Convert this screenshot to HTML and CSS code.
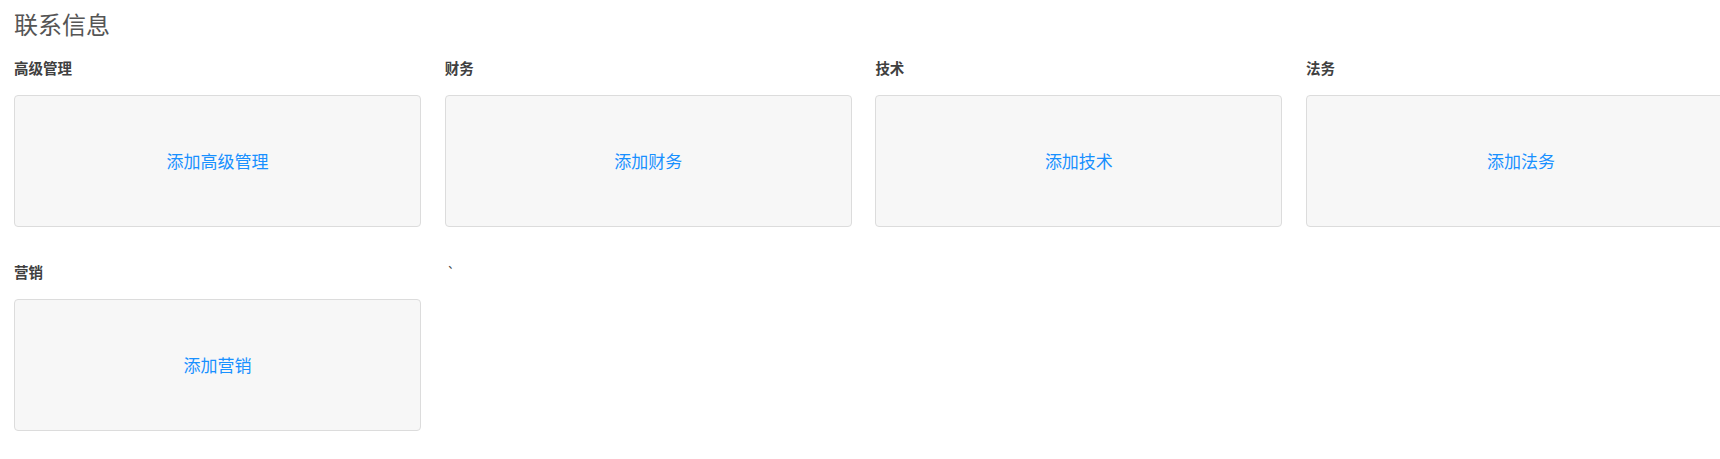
FILE: index.html
```html
<!DOCTYPE html>
<html lang="zh-CN">
<head>
<meta charset="utf-8">
<title>联系信息</title>
<link rel="stylesheet" href="styles.css">
</head>
<body>
<div class="page">
  <h1 class="title">联系信息</h1>
  <div class="grid">
    <section class="group">
      <div class="label">高级管理</div>
      <div class="card"><a class="add">添加高级管理</a></div>
    </section>
    <section class="group">
      <div class="label">财务</div>
      <div class="card"><a class="add">添加财务</a></div>
    </section>
    <section class="group">
      <div class="label">技术</div>
      <div class="card"><a class="add">添加技术</a></div>
    </section>
    <section class="group">
      <div class="label">法务</div>
      <div class="card"><a class="add">添加法务</a></div>
    </section>
    <section class="group">
      <div class="label">营销</div>
      <div class="card"><a class="add">添加营销</a></div>
    </section>
    <div class="stray">`</div>
  </div>
</div>
</body>
</html>
```

FILE: styles.css
```css
html, body {
  margin: 0;
  padding: 0;
  background: #fff;
  overflow: hidden;
}
body {
  font-family: "Noto Sans CJK SC", "Noto Sans", sans-serif;
  color: #444;
}
.page {
  padding: 8px 0 0 14px;
  width: 1760px;
}
.title {
  margin: 0;
  font-size: 24px;
  line-height: 32px;
  font-weight: 400;
  color: #555;
}
.grid {
  margin-top: 18px;
  display: grid;
  grid-template-columns: 407px 407px 407px 430px;
  column-gap: 23.7px;
  row-gap: 35px;
}
.label {
  font-size: 14.5px;
  line-height: 20px;
  font-weight: 700;
  color: #404040;
  margin-bottom: 17px;
}
.card {
  box-sizing: border-box;
  height: 132px;
  background: #f7f7f7;
  border: 1px solid #dcdcdc;
  border-radius: 4px;
  display: flex;
  align-items: center;
  justify-content: center;
}
.add {
  font-size: 17px;
  line-height: 22px;
  color: #1890ff;
  cursor: pointer;
}
.stray {
  font-size: 14px;
  line-height: 20px;
  color: #444;
  padding-left: 2px;
}
```
